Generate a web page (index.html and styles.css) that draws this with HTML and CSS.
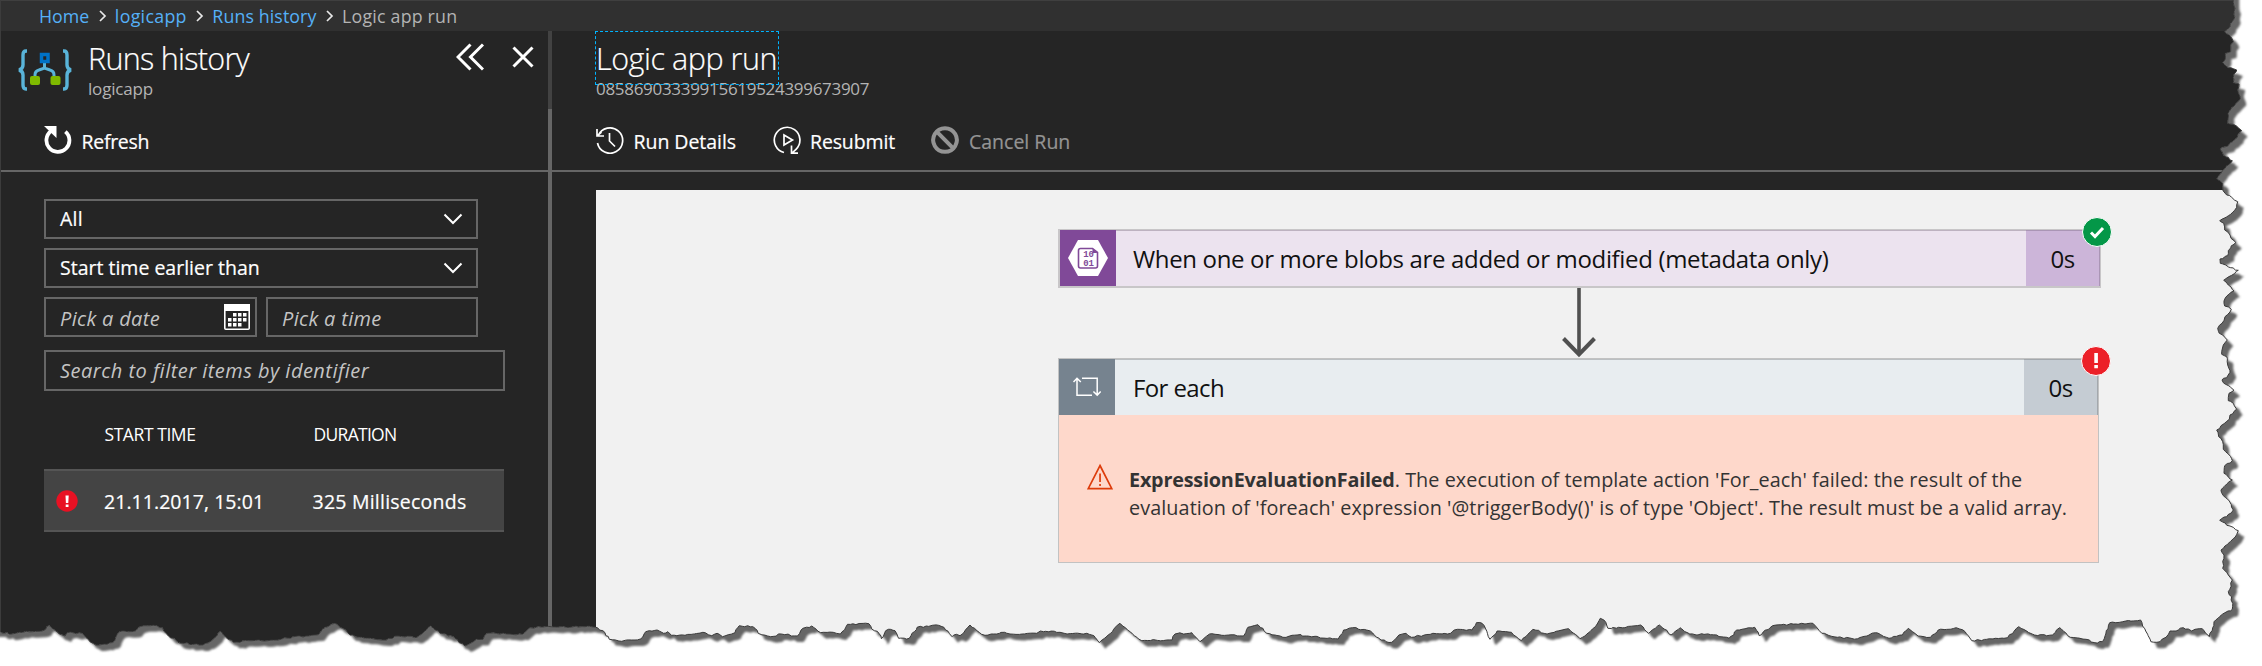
FILE: index.html
```html
<!DOCTYPE html>
<html lang="en">
<head>
<meta charset="utf-8">
<title>Logic app run</title>
<link rel="stylesheet" href="styles.css">
</head>
<body>
<div class="portal">
  <nav class="crumbs">
    <a class="c1">Home</a>
    <svg class="sep" viewBox="0 0 8 12"><path d="M1 1l5 5-5 5"/></svg>
    <a class="c2">logicapp</a>
    <svg class="sep" viewBox="0 0 8 12"><path d="M1 1l5 5-5 5"/></svg>
    <a class="c3">Runs history</a>
    <svg class="sep" viewBox="0 0 8 12"><path d="M1 1l5 5-5 5"/></svg>
    <span class="c4">Logic app run</span>
  </nav>
  <div class="blades">
    <section class="blade history">
      <header class="blade-head">
        <svg class="app-icon" viewBox="0 0 54 42">
          <g fill="none" stroke="#59b4d9" stroke-width="3.4"><path d="M9 2H8Q5 2 5 6v10q0 4-4 5 4 1 4 5v10q0 4 3 4h1"/><path d="M45 2h1q3 0 3 4v10q0 4 4 5-4 1-4 5v10q0 4-3 4h-1"/><path stroke-width="3" d="M26.500 13v7M17 29v-3q0-4 4-5l5.500-2 5.500 2q4 1 4 5v3"/></g>
          <rect x="23.500" y="5.500" width="6.500" height="7" fill="none" stroke="#0072c6" stroke-width="3.500"/>
          <rect x="12" y="27" width="10" height="9" rx="2" fill="#7fba00"/><rect x="32.500" y="27" width="10" height="9" rx="2" fill="#7fba00"/>
        </svg>
        <div class="titles">
          <h1 class="t-runs">Runs history</h1>
          <p class="sub1">logicapp</p>
        </div>
        <div class="blade-actions">
          <svg width="28" height="28" viewBox="0 0 28 28"><path d="M14.500 1.500L2 14l12.500 12.500M27 1.500L14.500 14 27 26.500"/></svg>
          <svg width="22" height="22" viewBox="0 0 22 22"><path d="M1.500 1.500l19 19M20.500 1.500l-19 19"/></svg>
        </div>
      </header>
      <div class="toolbar">
        <button class="tool"><svg width="28" height="28" viewBox="0 0 28 28"><path d="M21.400 5.600a11.500 11.500 0 1 1-14.200-.600" fill="none" stroke="#fff" stroke-width="3.800"/><path d="M0 0h12.500v12z" fill="#fff"/></svg><span class="t-refresh">Refresh</span></button>
      </div>
      <div class="filters">
        <div class="field"><span class="f-all">All</span><svg class="chev" viewBox="0 0 20 12"><path d="M1.500 1.500L10 10l8.500-8.500"/></svg></div>
        <div class="field"><span class="f-start">Start time earlier than</span><svg class="chev" viewBox="0 0 20 12"><path d="M1.500 1.500L10 10l8.500-8.500"/></svg></div>
        <div class="pair">
          <div class="field date hint"><span class="f-date">Pick a date</span>
            <svg class="cal" viewBox="0 0 26 26"><rect x=".8" y=".8" width="24.400" height="24.400" rx="1" fill="none" stroke="#fff" stroke-width="1.600"/><path d="M0 0h26v7H0z" fill="#fff"/><path d="M9 9h3.500v3.500H9zM14 9h3.500v3.500H14zM19 9h3.500v3.500H19zM4 14h3.500v3.500H4zM9 14h3.500v3.500H9zM14 14h3.500v3.500H14zM19 14h3.500v3.500H19zM4 19h3.500v3.500H4zM9 19h3.500v3.500H9zM14 19h3.500v3.500H14z" fill="#fff"/></svg>
          </div>
          <div class="field time hint"><span class="f-time">Pick a time</span></div>
        </div>
        <div class="field search hint"><span class="f-search">Search to filter items by identifier</span></div>
      </div>
      <div class="runs">
        <div class="run-head"><span class="h-start">START TIME</span><span class="h-dur">DURATION</span></div>
        <div class="run">
          <svg class="run-icon" viewBox="0 0 22 22"><circle cx="11" cy="11" r="10.700" fill="#e81123"/><path d="M9.500 5.500h3.200l-.4 7.500h-2.400zM9.700 14.500h2.800V17H9.700z" fill="#fff"/></svg>
          <span class="r-start">21.11.2017, 15:01</span><span class="r-dur">325 Milliseconds</span>
        </div>
      </div>
    </section>
    <div class="divider"></div>
    <section class="blade detail">
      <header class="blade-head">
        <div class="titles">
          <h1 class="focused">Logic app run</h1>
          <p class="sub2">08586903339915619524399673907</p>
        </div>
      </header>
      <div class="toolbar">
        <button class="tool"><svg width="28" height="28" viewBox="0 0 28 28"><path d="M2.300 9.500A12.700 12.700 0 1 1 1.500 17M1 3v7h7M1.500 9.500l4-3.500M13.500 7v8l5.500 5.500" fill="none" stroke="#fff" stroke-width="1.700"/></svg><span class="t-details">Run Details</span></button>
        <button class="tool"><svg width="28" height="28" viewBox="0 0 28 28"><path d="M11 26.500a12.800 12.800 0 1 1 12-3.200L18.500 27.500M18.500 19.500V27.200h6.500M11 9v10l8.500-5z" fill="none" stroke="#fff" stroke-width="1.700"/></svg><span class="t-resubmit">Resubmit</span></button>
        <button class="tool off"><svg width="28" height="28" viewBox="0 0 28 28"><path d="M14 2.200a11.800 11.800 0 1 0 .01 0M5.700 5.700l16.600 16.600" fill="none" stroke="#949494" stroke-width="4"/></svg><span class="t-cancel">Cancel Run</span></button>
      </div>
      <div class="canvas">
        <div class="flow">
          <article class="card trigger">
            <div class="glyph"><svg width="40" height="36" viewBox="0 0 40 36"><path d="M10 0h20l10 18-10 18H10L0 18z" fill="#fff"/><path d="M12.500 8.500h12l5 4V26q0 2-2 2h-15q-2 0-2-2V10.500q0-2 2-2z" fill="none" stroke="#804998" stroke-width="1.600"/><path d="M24.500 8v5h5z" fill="#804998"/><text x="15.200" y="17.300">10</text><text x="15.200" y="26">01</text></svg></div>
            <div class="name"><span class="n-trigger">When one or more blobs are added or modified (metadata only)</span></div>
            <div class="took"><span>0s</span></div>
            <svg class="badge" viewBox="0 0 30 30"><circle cx="15" cy="15" r="14.500" fill="#049748" stroke="#fff"/><path d="M9 15.500l4 4 8-8.500" fill="none" stroke="#fff" stroke-width="3"/></svg>
          </article>
          <svg class="arrow" width="34" height="70" viewBox="0 0 34 70"><path d="M17 0v65" stroke-width="3.600"/><path d="M1.500 50.500L17 66.500l15.500-16" stroke-width="4"/></svg>
          <article class="card loop">
            <div class="card-row">
              <div class="glyph"><svg width="28" height="20" viewBox="0 0 28 20"><path d="M4 2v16.200h15M9 1.200h15.200v16.500M.5 5L4 1.300 7.800 5M20.400 14.500l3.800 3.600 3.500-3.600" fill="none" stroke="#fff" stroke-width="1.500"/></svg></div>
              <div class="name"><span class="n-loop">For each</span></div>
              <div class="took"><span>0s</span></div>
            </div>
            <div class="error">
              <svg class="warn" viewBox="0 0 26 27"><path d="M13 2.500L24.800 25.700H1.200z" fill="none" stroke="#dd3c0b" stroke-width="1.700"/><path d="M12.200 10.500h1.700v8.500h-1.700zM12.200 21h1.700v2h-1.700z" fill="#dd3c0b"/></svg>
              <p><b>ExpressionEvaluationFailed</b><span class="e-1">. The execution of template action 'For_each' failed: the result of the</span><br><span class="e-2">evaluation of 'foreach' expression '@triggerBody()' is of type 'Object'. The result must be a valid array.</span></p>
            </div>
            <svg class="badge" viewBox="0 0 30 30"><circle cx="15" cy="15" r="14.500" fill="#ec2028" stroke="#fff"/><path d="M13.300 7h3.600v10h-3.600zM13.300 19h3.600v3.200h-3.600z" fill="#fff"/></svg>
          </article>
        </div>
      </div>
    </section>
  </div>
  <svg class="torn" width="2262" height="666" viewBox="0 0 2262 666">
    <defs>
      <clipPath id="outside"><path id="outside-path" clip-rule="evenodd"/></clipPath>
      <filter id="soft" x="-5%" y="-5%" width="110%" height="110%"><feGaussianBlur stdDeviation="1.300"/></filter>
    </defs>
    <g clip-path="url(#outside)">
      <rect width="2262" height="666" fill="#fff"/>
      <path id="shadow" fill="#666" filter="url(#soft)" transform="translate(6 6)"/>
    </g>
    <path id="edge" fill="none" stroke="#3a3a3a" stroke-width="1"/>
  </svg>
</div>
<script src="torn.js"></script>
</body>
</html>
```
FILE: styles.css
```css
* { box-sizing: border-box; margin: 0; padding: 0; }
body { width: 2262px; height: 666px; overflow: hidden; background: #fff; font-family: "Open Sans", "Noto Sans", sans-serif; color: #fff; }
.portal { position: relative; width: 2262px; height: 666px; background: #252525; display: flex; flex-direction: column; overflow: hidden; }
.crumbs { height: 31px; flex: none; border-top: 1px solid #3f3f3f; border-left: 1px solid #3c3c3c; background: #303030; display: flex; align-items: center; padding-left: 38px; font-size: 17.800px; line-height: 30px; color: #b4b4b4; white-space: nowrap; }
.crumbs a { color: #55b0f8; }
.c2 { letter-spacing: .3px; }
.c3 { letter-spacing: .1px; }
.c4 { letter-spacing: .2px; }
.sep { width: 8px; height: 12px; margin: 0 8.300px 0 9.300px; flex: none; }
.sep path { fill: none; stroke: #e8e8e8; stroke-width: 1.700; }
.blades { flex: 1; display: flex; border-left: 1px solid #3c3c3c; }
.blade { display: flex; flex-direction: column; }
.history { width: 547px; }
.divider { width: 4px; background: linear-gradient(#424242 78px, #666 78px); }
.detail { flex: 1; }
.blade-head { height: 68px; display: flex; padding-top: 6px; white-space: nowrap; }
.app-icon { width: 54px; height: 42px; margin: 12px 16px 0 17px; }
h1 { font-size: 30.500px; line-height: 42px; font-weight: 300; position: relative; width: max-content; -webkit-text-stroke: .2px; }
.t-runs { letter-spacing: -.7px; }
.focused { letter-spacing: -.45px; }
.titles p { font-size: 17px; line-height: 20px; color: #b4b4b4; width: max-content; }
.sub1 { letter-spacing: -.18px; }
.sub2 { letter-spacing: -.3px; }
.focused::after { content: ""; position: absolute; left: -1px; top: -6px; width: 182px; height: 52px; border: 1px dashed #00b4ff; }
.blade-actions { margin-left: auto; display: flex; gap: 28px; padding: 5px 14px 0 0; height: 35px; align-items: center; }
.blade-actions path { fill: none; stroke: #fff; stroke-width: 3; }
.toolbar { height: 73px; padding: 13px 0 0 43px; border-bottom: 2px solid #666; display: flex; align-items: center; }
.detail .blade-head, .detail .toolbar { padding-left: 44px; }
.tool { display: flex; align-items: center; gap: 10px; background: none; border: 0; color: #fff; font: 19.500px/28px "Open Sans", sans-serif; margin-right: 36.500px; white-space: nowrap; }
.tool svg { margin-top: -2px; }
.tool span { padding-top: 1px; margin-left: -.5px; }
.t-refresh { letter-spacing: -.3px; }
.t-details { letter-spacing: -.05px; }
.t-resubmit { letter-spacing: -.14px; }
.off { color: #949494; }
.tool, .field, .run { -webkit-text-stroke: .2px; }
.filters { padding: 27px 0 0 43px; display: flex; flex-direction: column; gap: 9px; }
.field { width: 434px; height: 40px; border: 2px solid #666; display: flex; align-items: center; justify-content: space-between; padding: 0 13px 0 14px; font-size: 19.500px; line-height: 28px; white-space: nowrap; }
.f-all { letter-spacing: .27px; }
.chev { width: 20px; height: 12px; }
.chev path { fill: none; stroke: #fff; stroke-width: 2; }
.pair { display: flex; gap: 9px; }
.hint { font-style: italic; color: #c4c4c4; padding-left: 14px; font-size: 20px; -webkit-text-stroke: 0; letter-spacing: .33px; }
.date { width: 213px; padding-right: 5px; }
.time { width: 212px; }
.date span, .time span { margin-top: 4px; }
.cal { width: 26px; height: 26px; }
.search { width: 461px; height: 41px; margin-top: 4px; letter-spacing: .48px; }
.runs { padding-left: 43px; width: 503px; white-space: nowrap; }
.run-head { height: 78px; padding: 8px 0 0 60.500px; display: grid; grid-template-columns: 209px 1fr; align-items: center; font-size: 17.500px; }
.h-start { letter-spacing: -.43px; }
.h-dur { letter-spacing: -.71px; }
.run { height: 63px; background: #444; border: solid #555; border-width: 2px 0; display: grid; grid-template-columns: 22px 209px 1fr; align-items: center; padding: 1px 0 0 12px; font-size: 19.500px; }
.run-icon { width: 22px; height: 22px; margin-top: -1px; }
.r-start { padding-left: 26px; letter-spacing: .05px; }
.r-dur { padding-left: 25.500px; letter-spacing: .23px; }
.canvas { flex: 1; margin: 18px 0 0 44px; background: #f1f1f1; padding: 39px 0 0 462px; color: #111; }
.flow { width: 1043px; display: flex; flex-direction: column; }
.card { position: relative; }
.trigger { height: 59px; border: solid #c8c6c8; border-width: 1px 1px 2px 2px; display: flex; }
.card-row { display: flex; height: 56px; }
.glyph { width: 56px; display: flex; align-items: center; justify-content: center; }
.trigger .glyph { background: #804998; }
.glyph text { font: bold 9px "Liberation Mono", monospace; fill: #804998; }
.name { flex: 1; padding-left: 17px; display: flex; align-items: center; font-size: 24px; line-height: 32px; white-space: nowrap; }
.n-trigger { letter-spacing: -.34px; }
.n-loop { letter-spacing: -.61px; }
.took { width: 74px; display: flex; align-items: center; justify-content: center; font-size: 24px; letter-spacing: -.6px; }
.trigger .name { background: #ece3ef; border-top: 1px solid #bdb2c0; }
.trigger .took { background: #ccb5d9; border-top: 1px solid #aa95b5; border-right: 1px solid #aa95b5; }
.badge { position: absolute; width: 30px; height: 30px; right: -12px; top: -13px; }
.arrow { margin-left: 503.500px; flex: none; }
.arrow path { fill: none; stroke: #505050; }
.loop { width: 1041px; border: 1px solid #c2c2c2; height: 205px; }
.loop .badge { right: -13px; }
.loop .glyph { background: #76838f; }
.loop .name { background: #e8edf0; padding-left: 18px; border-top: 1px solid #bbbfc2; }
.loop .took { background: #c5ccd3; border-top: 1px solid #a3a8ad; border-right: 1px solid #a3a8ad; }
.error { height: 147px; background: #fed8cb; display: flex; padding: 48px 0 0 28px; color: #333; font-size: 19.800px; line-height: 28px; white-space: nowrap; }
.warn { width: 26px; height: 27px; margin: 0 16px 0 0; }
.error p { padding-top: 3px; }
.error b { letter-spacing: -.2px; }
.e-1 { letter-spacing: .06px; }
.e-2 { letter-spacing: .09px; }
.torn { position: absolute; left: 0; top: 0; }
```
FILE: torn.js
```js
// Torn page edge: runs along the bottom, then up the right side.
const runs = [
  [0, 400, 2.613, 3, "0,693 12,700 18,697 25,703 50,697 85,695 112,692 128,676 140,688 155,702 170,708 175,698 215,700 225,713 235,725 250,735 280,733 300,722 312,695 355,692 362,682 400,676 425,683 440,708 455,715 465,727 520,735 545,728 560,715 575,693 590,712 610,727 650,722 700,722 750,714 800,708 832,704 850,682 875,670 895,685 915,705 945,712 1000,720 1040,708 1090,712 1108,695 1125,678 1150,700 1185,710 1200,728 1215,738 1245,718 1262,718 1272,700 1330,702 1365,703 1385,683 1440,680"],
  [560, 590, 2.8, 3, "0,110 70,110 100,112 120,122 138,148 165,153 200,150 225,147 240,125 272,120 290,130 302,125 312,136 350,136 400,127 425,137 440,130 455,140 490,128 502,107 540,110 555,130 590,140 620,132 665,138 680,115 705,108 730,128 765,127 785,132 805,103 865,101 880,122 893,130 900,146 912,122 925,118 938,122 948,145 978,145 1000,112 1060,106 1075,112 1098,140 1110,133 1120,137 1135,120 1148,105 1165,120 1190,136 1245,127 1260,132 1335,130 1345,123 1400,127 1420,132 1475,130 1495,137 1510,158 1535,135 1550,118"],
  [1040, 400, 2.8, 3, "224,670 245,690 285,722 370,720 378,702 425,698 448,725 475,702 570,708 582,682 610,674 635,700 680,712 720,705 835,717 850,690 875,683 925,693 955,720 985,727 1005,705 1025,700 1040,712 1100,700 1150,700 1160,690 1210,690 1222,668 1238,670 1260,718 1280,693 1320,697 1348,722 1380,688 1420,702 1480,686 1512,716 1540,695 1555,680"],
  [1560, 400, 2.234, 3, "90,655 98,660 107,685 145,683 180,675 198,700 222,675 248,705 268,683 290,702 350,705 378,715 395,690 435,682 445,707 475,677 540,670 565,670 585,700 620,712 665,716 705,698 735,715 765,705 778,685 800,708 828,712 845,690 885,683 905,695 920,722 1000,713 1025,680 1060,705 1100,705 1116,683 1140,712 1175,718 1195,728 1212,725 1228,668 1297,660 1320,725"],
  [2160, 330, 3, 3, "0,935 18,922 30,903 55,900 70,893 85,897 95,903 105,898 127,896 137,910 148,920 158,893 167,870 195,848 217,838 215,800 205,785 217,750 205,735 188,715 192,675 183,660 200,645 225,622 235,602 210,588 179,571 200,560 220,540 208,513 190,497 183,480 200,462 217,450 192,430 194,407 217,392 205,372 190,358 188,335 176,320 170,300 183,287 208,268 210,255 230,238 220,220 205,212 207,190 222,181 212,172 190,158 186,150 200,143 210,127 203,105 200,80 185,73 190,45 202,30 188,15"],
  [2160, 0, 3, 3, "178,1000 173,985 186,970 195,950 214,928 194,918 192,903 208,882 222,873 205,855 191,841 215,826 235,811 212,803 181,790 180,777 203,767 205,752 227,727 213,715 210,705 194,690 191,670 179,662 192,655 212,643 230,622 233,605 215,592 200,585 189,572 188,550 170,537 183,520 195,505 217,482 190,465 180,447 205,437 225,417 245,392 220,373 203,370 204,340 222,318 241,298 234,275 237,252 220,248 222,222 230,210 205,203 188,188 196,178 196,160 212,155 212,135 220,125 212,110 194,95 210,80 217,65 224,50 222,35 225,25 221,15 220,0"]
];
const pts = [];
for (const [ox, oy, sx, sy, list] of runs)
  for (const p of list.split(" ")) {
    const [x, y] = p.split(",").map(Number);
    pts.push([ox + x / sx, oy + y / sy]);
  }
let seed = 7;
const noise = () => (seed = (seed * 16807) % 2147483647) / 2147483647 - 0.5;
let d = "M" + pts[0].join(" ");
for (let i = 1; i < pts.length; i++) {
  const [ax, ay] = pts[i - 1], [bx, by] = pts[i];
  const n = Math.max(1, Math.round(Math.hypot(bx - ax, by - ay) / 3));
  for (let k = 1; k <= n; k++) {
    const j = k < n ? 1.6 : 0;
    d += `L${(ax + (bx - ax) * k / n + noise() * j).toFixed(1)} ${(ay + (by - ay) * k / n + noise() * j).toFixed(1)}`;
  }
}
const closed = d + "V-20H-20V" + pts[0][1] + "Z";
document.getElementById("edge").setAttribute("d", d);
document.getElementById("shadow").setAttribute("d", closed);
document.getElementById("outside-path").setAttribute("d", "M-30 -30H2300V700H-30Z" + closed);
```
